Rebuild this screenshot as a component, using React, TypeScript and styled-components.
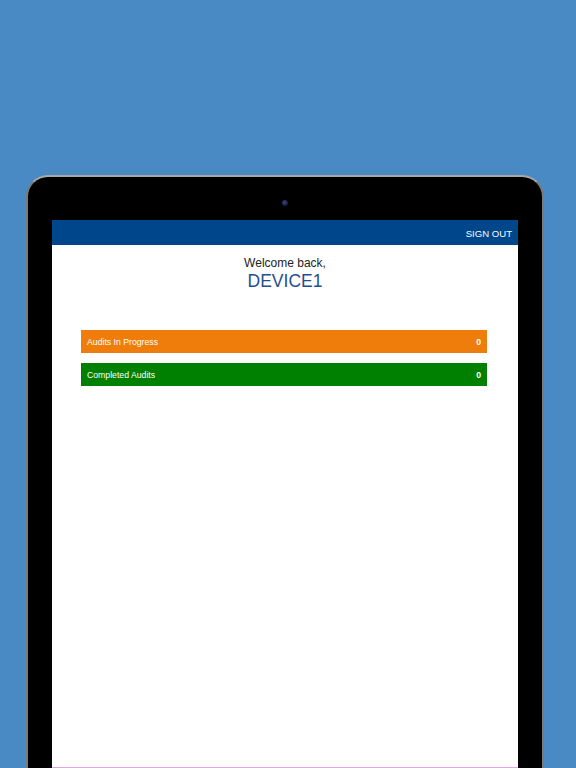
import React from "react";
import styled, { createGlobalStyle } from "styled-components";

const GlobalStyle = createGlobalStyle`
  html, body {
    margin: 0;
    padding: 0;
    height: 100%;
    overflow: hidden;
    background: #4a8ac4;
    font-family: "Liberation Sans", Arial, sans-serif;
  }
`;

const Stage = styled.div`
  width: 576px;
  height: 768px;
  padding-top: 175px;
  box-sizing: border-box;
  display: flex;
  justify-content: center;
  overflow: hidden;
`;

const Device = styled.div`
  width: 518px;
  height: 620px;
  box-sizing: border-box;
  margin-left: -6px;
  background: #000;
  border: 2px solid #7a7a7a;
  border-top-color: #a8a8a8;
  border-bottom: none;
  border-radius: 22px 22px 0 0;
  padding: 0 24px;
  display: flex;
  flex-direction: column;
`;

const Bezel = styled.div`
  height: 43px;
  display: flex;
  align-items: center;
  justify-content: center;
  padding-top: 8px;
  box-sizing: border-box;
`;

const Camera = styled.div`
  width: 6px;
  height: 6px;
  border-radius: 50%;
  background: radial-gradient(circle at 40% 40%, #3a4a8a 0%, #1a2040 60%, #0b0b14 100%);
`;

const Screen = styled.div`
  height: 547px;
  background: #fff;
  display: flex;
  flex-direction: column;
  border-bottom: 1px solid #e2a6e6;
`;

const TopBar = styled.header`
  height: 25px;
  background: #00468b;
  display: flex;
  align-items: center;
  justify-content: flex-end;
  padding: 2px 6px 0 0;
  box-sizing: border-box;
`;

const SignOut = styled.span`
  color: #fff;
  font-size: 9.6px;
`;

const Welcome = styled.div`
  display: flex;
  flex-direction: column;
  align-items: center;
  padding-top: 11px;
`;

const Greeting = styled.div`
  color: #222;
  font-size: 12px;
  line-height: 14px;
`;

const DeviceName = styled.div`
  color: #1f4f8f;
  font-size: 17.5px;
  line-height: 20px;
  margin-top: 1px;
`;

const Tiles = styled.div`
  display: flex;
  flex-direction: column;
  gap: 10px;
  padding: 39px 31px 0 29px;
`;

const Tile = styled.div<{ $bg: string }>`
  height: 23px;
  background: ${(p) => p.$bg};
  display: flex;
  align-items: center;
  justify-content: space-between;
  padding: 0 6px;
  color: #fff;
  font-size: 8.7px;
`;

const Count = styled.span`
  font-weight: bold;
`;

export default function App() {
  return (
    <>
      <GlobalStyle />
      <Stage>
        <Device>
          <Bezel>
            <Camera />
          </Bezel>
          <Screen>
            <TopBar>
              <SignOut>SIGN OUT</SignOut>
            </TopBar>
            <Welcome>
              <Greeting>Welcome back,</Greeting>
              <DeviceName>DEVICE1</DeviceName>
            </Welcome>
            <Tiles>
              <Tile $bg="#ee7d0c">
                <span>Audits In Progress</span>
                <Count>0</Count>
              </Tile>
              <Tile $bg="#008000">
                <span>Completed Audits</span>
                <Count>0</Count>
              </Tile>
            </Tiles>
          </Screen>
        </Device>
      </Stage>
    </>
  );
}
